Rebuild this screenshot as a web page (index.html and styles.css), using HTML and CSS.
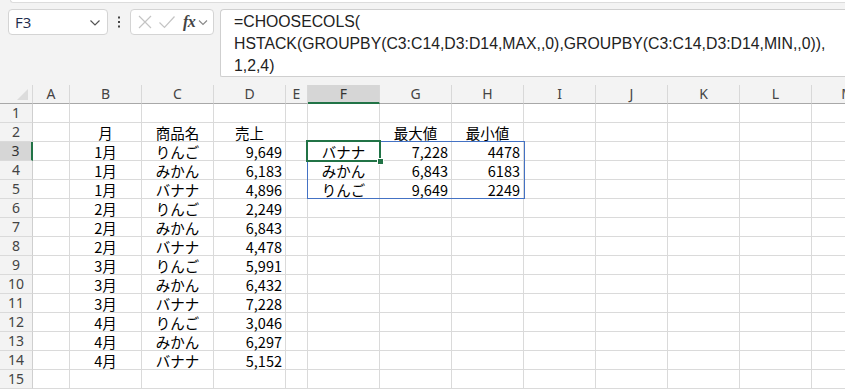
FILE: index.html
```html
<!DOCTYPE html>
<html lang="ja">
<head>
<meta charset="utf-8">
<link rel="stylesheet" href="styles.css">
</head>
<body>
<div class="top">
  <div class="ribbon-edge"></div>
  <div class="bar">
    <div class="namebox">
      <span class="name">F3</span>
      <svg class="chev" width="12" height="8" viewBox="0 0 12 8"><path d="M1.5 1.5 L6 6 L10.5 1.5" fill="none" stroke="#555" stroke-width="1.2"/></svg>
    </div>
    <div class="dots"><svg width="4" height="12" viewBox="0 0 4 12"><rect x="1" y="0.5" width="2" height="2" fill="#444"/><rect x="1" y="5" width="2" height="2" fill="#444"/><rect x="1" y="9.5" width="2" height="2" fill="#444"/></svg></div>
    <div class="fxbox">
      <svg width="16" height="16" viewBox="0 0 16 16"><path d="M2 2 L14 14 M14 2 L2 14" stroke="#c4c4c4" stroke-width="1.2" fill="none"/></svg>
      <svg width="18" height="16" viewBox="0 0 18 16"><path d="M1.5 8.5 L6.5 13.5 L16.5 2.5" stroke="#c4c4c4" stroke-width="1.2" fill="none"/></svg>
      <span class="fx">fx</span>
      <svg class="chev2" width="10" height="7" viewBox="0 0 10 7"><path d="M1 1.5 L5 5.5 L9 1.5" fill="none" stroke="#888" stroke-width="1.1"/></svg>
    </div>
    <div class="formula">
      <div>=CHOOSECOLS(</div>
      <div>HSTACK(GROUPBY(C3:C14,D3:D14,MAX,,0),GROUPBY(C3:C14,D3:D14,MIN,,0)),</div>
      <div>1,2,4)</div>
    </div>
  </div>
</div>

<div class="sheet">
  <div class="row hdr">
    <div class="corner"><span class="tri"></span></div>
    <div class="ch">A</div><div class="ch">B</div><div class="ch">C</div><div class="ch">D</div><div class="ch">E</div>
    <div class="ch sel">F</div><div class="ch">G</div><div class="ch">H</div><div class="ch">I</div><div class="ch">J</div>
    <div class="ch">K</div><div class="ch">L</div><div class="ch">M</div>
  </div>
  <div class="row"><div class="rh">1</div><div class="c"></div><div class="c"></div><div class="c"></div><div class="c"></div><div class="c"></div><div class="c"></div><div class="c"></div><div class="c"></div><div class="c"></div><div class="c"></div><div class="c"></div><div class="c"></div><div class="c"></div></div>
  <div class="row"><div class="rh">2</div><div class="c"></div><div class="c ctr">月</div><div class="c ctr">商品名</div><div class="c ctr">売上</div><div class="c"></div><div class="c"></div><div class="c ctr">最大値</div><div class="c ctr">最小値</div><div class="c"></div><div class="c"></div><div class="c"></div><div class="c"></div><div class="c"></div></div>
  <div class="row"><div class="rh rsel">3</div><div class="c"></div><div class="c ctr">1月</div><div class="c ctr">りんご</div><div class="c num">9,649</div><div class="c"></div><div class="c ctr">バナナ</div><div class="c num">7,228</div><div class="c num">4478</div><div class="c"></div><div class="c"></div><div class="c"></div><div class="c"></div><div class="c"></div></div>
  <div class="row"><div class="rh">4</div><div class="c"></div><div class="c ctr">1月</div><div class="c ctr">みかん</div><div class="c num">6,183</div><div class="c"></div><div class="c ctr">みかん</div><div class="c num">6,843</div><div class="c num">6183</div><div class="c"></div><div class="c"></div><div class="c"></div><div class="c"></div><div class="c"></div></div>
  <div class="row"><div class="rh">5</div><div class="c"></div><div class="c ctr">1月</div><div class="c ctr">バナナ</div><div class="c num">4,896</div><div class="c"></div><div class="c ctr">りんご</div><div class="c num">9,649</div><div class="c num">2249</div><div class="c"></div><div class="c"></div><div class="c"></div><div class="c"></div><div class="c"></div></div>
  <div class="row"><div class="rh">6</div><div class="c"></div><div class="c ctr">2月</div><div class="c ctr">りんご</div><div class="c num">2,249</div><div class="c"></div><div class="c"></div><div class="c"></div><div class="c"></div><div class="c"></div><div class="c"></div><div class="c"></div><div class="c"></div><div class="c"></div></div>
  <div class="row"><div class="rh">7</div><div class="c"></div><div class="c ctr">2月</div><div class="c ctr">みかん</div><div class="c num">6,843</div><div class="c"></div><div class="c"></div><div class="c"></div><div class="c"></div><div class="c"></div><div class="c"></div><div class="c"></div><div class="c"></div><div class="c"></div></div>
  <div class="row"><div class="rh">8</div><div class="c"></div><div class="c ctr">2月</div><div class="c ctr">バナナ</div><div class="c num">4,478</div><div class="c"></div><div class="c"></div><div class="c"></div><div class="c"></div><div class="c"></div><div class="c"></div><div class="c"></div><div class="c"></div><div class="c"></div></div>
  <div class="row"><div class="rh">9</div><div class="c"></div><div class="c ctr">3月</div><div class="c ctr">りんご</div><div class="c num">5,991</div><div class="c"></div><div class="c"></div><div class="c"></div><div class="c"></div><div class="c"></div><div class="c"></div><div class="c"></div><div class="c"></div><div class="c"></div></div>
  <div class="row"><div class="rh">10</div><div class="c"></div><div class="c ctr">3月</div><div class="c ctr">みかん</div><div class="c num">6,432</div><div class="c"></div><div class="c"></div><div class="c"></div><div class="c"></div><div class="c"></div><div class="c"></div><div class="c"></div><div class="c"></div><div class="c"></div></div>
  <div class="row"><div class="rh">11</div><div class="c"></div><div class="c ctr">3月</div><div class="c ctr">バナナ</div><div class="c num">7,228</div><div class="c"></div><div class="c"></div><div class="c"></div><div class="c"></div><div class="c"></div><div class="c"></div><div class="c"></div><div class="c"></div><div class="c"></div></div>
  <div class="row"><div class="rh">12</div><div class="c"></div><div class="c ctr">4月</div><div class="c ctr">りんご</div><div class="c num">3,046</div><div class="c"></div><div class="c"></div><div class="c"></div><div class="c"></div><div class="c"></div><div class="c"></div><div class="c"></div><div class="c"></div><div class="c"></div></div>
  <div class="row"><div class="rh">13</div><div class="c"></div><div class="c ctr">4月</div><div class="c ctr">みかん</div><div class="c num">6,297</div><div class="c"></div><div class="c"></div><div class="c"></div><div class="c"></div><div class="c"></div><div class="c"></div><div class="c"></div><div class="c"></div><div class="c"></div></div>
  <div class="row"><div class="rh">14</div><div class="c"></div><div class="c ctr">4月</div><div class="c ctr">バナナ</div><div class="c num">5,152</div><div class="c"></div><div class="c"></div><div class="c"></div><div class="c"></div><div class="c"></div><div class="c"></div><div class="c"></div><div class="c"></div><div class="c"></div></div>
  <div class="row"><div class="rh">15</div><div class="c"></div><div class="c"></div><div class="c"></div><div class="c"></div><div class="c"></div><div class="c"></div><div class="c"></div><div class="c"></div><div class="c"></div><div class="c"></div><div class="c"></div><div class="c"></div><div class="c"></div></div>

  <div class="spill"></div>
  <div class="active"><span class="handle"></span></div>
</div>
</body>
</html>
```

FILE: styles.css
```css
* { box-sizing: border-box; }
html, body { margin: 0; padding: 0; }
body {
  width: 845px;
  height: 389px;
  overflow: hidden;
  background: #f3f3f3;
  font-family: "Noto Sans CJK JP", "Noto Sans", sans-serif;
}

.top {
  height: 85px;
  position: relative;
}
.ribbon-edge {
  margin-left: 10px;
  height: 3px;
  background: #fff;
  border-bottom: 1px solid #dcdcdc;
  border-left: 1px solid #dcdcdc;
  border-bottom-left-radius: 3px;
}
.bar {
  display: flex;
  align-items: flex-start;
  padding: 6px 0 0 8px;
}
.namebox {
  width: 100px;
  height: 26px;
  background: #fff;
  border: 1px solid #d4d4d4;
  border-radius: 4px;
  display: flex;
  align-items: center;
  justify-content: space-between;
  padding: 0 6px 0 6px;
}
.name {
  font-family: "Open Sans", "Noto Sans", sans-serif;
  font-size: 15px;
  color: #1b2a4a;
}
.chev { margin-top: 1px; }
.dots {
  width: 22px;
  height: 26px;
  display: flex;
  align-items: center;
  justify-content: center;
}
.fxbox {
  width: 84px;
  height: 26px;
  background: #fff;
  border: 1px solid #d4d4d4;
  border-radius: 4px;
  display: flex;
  align-items: center;
  gap: 5px;
  padding: 0 3px 0 6px;
}
.fx {
  font-family: "Liberation Serif", serif;
  font-style: italic;
  font-weight: bold;
  font-size: 16px;
  color: #444;
  margin-left: 2px;
  letter-spacing: -0.5px;
}
.chev2 { margin-left: -2px; }
.formula {
  margin-left: 6px;
  flex: 1;
  height: 68px;
  background: #fff;
  border: 1px solid #cfcfcf;
  border-right: none;
  border-top-left-radius: 4px;
  border-bottom-left-radius: 2px;
  padding: 1px 0 0 13px;
  font-family: "Liberation Sans", Arial, sans-serif;
  font-size: 15.8px;
  line-height: 22px;
  color: #222;
  white-space: nowrap;
}

.sheet {
  position: relative;
  background: #fff;
}
.row {
  display: grid;
  grid-template-columns: 33px 37px 72px 72px 72px 22px 72px 72px 72px 72px 72px 72px 72px 72px;
  height: 19px;
}
.row > div {
  border-right: 1px solid #dadada;
  border-bottom: 1px solid #dadada;
  height: 19px;
}
.hdr > div {
  background: #f3f3f3;
  border-bottom: 1px solid #a8a8a8;
  border-right: 1px solid #d8d8d8;
}
.corner { position: relative; }
.tri {
  position: absolute;
  right: 4px;
  bottom: 3px;
  width: 0;
  height: 0;
  border-left: 11px solid transparent;
  border-bottom: 11px solid #dcdcdc;
}
.ch, .rh {
  font-family: "Noto Sans", "Open Sans", sans-serif;
  font-size: 14px;
  color: #444;
  text-align: center;
  line-height: 18px;
}
.rh {
  background: #f3f3f3;
  border-right: 1px solid #cfcfcf !important;
}
.ch.sel {
  background: #d6d6d6;
  border-bottom: 2px solid #217346;
  color: #333;
}
.rh.rsel {
  background: #d6d6d6;
  border-right: 2px solid #217346 !important;
  color: #333;
}
.c {
  font-size: 14.5px;
  color: #000;
  line-height: 19px;
  padding: 0 3px;
  white-space: nowrap;
  overflow: visible;
}
.ctr { text-align: center; }
.num { text-align: right; }

.spill {
  position: absolute;
  left: 307px;
  top: 56px;
  width: 218px;
  height: 58px;
  border: 1px solid #4472c4;
  pointer-events: none;
}
.active {
  position: absolute;
  left: 306px;
  top: 55px;
  width: 75px;
  height: 22px;
  border: 2px solid #217346;
}
.handle {
  position: absolute;
  right: -5px;
  bottom: -5px;
  width: 7px;
  height: 7px;
  background: #217346;
  border: 1px solid #fff;
}
```
